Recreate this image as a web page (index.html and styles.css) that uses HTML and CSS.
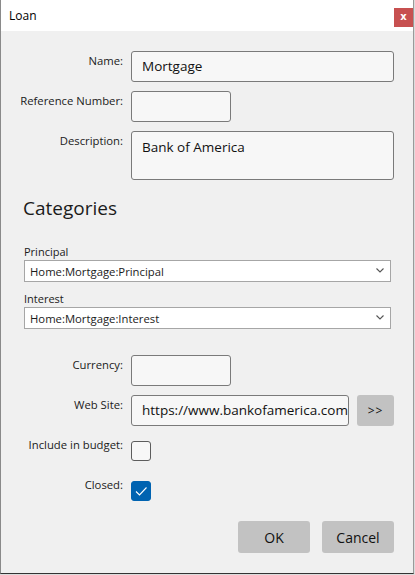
FILE: index.html
```html
<!DOCTYPE html>
<html>
<head>
<meta charset="utf-8">
<link rel="stylesheet" href="styles.css">
</head>
<body>
<div class="window">
  <div class="titlebar">
    <span class="title">Loan</span>
    <span class="close">x</span>
  </div>
  <div class="content">
    <div class="form">
      <label class="lbl">Name:</label>
      <div class="field wide">Mortgage</div>
      <label class="lbl">Reference Number:</label>
      <div class="field short"></div>
      <label class="lbl">Description:</label>
      <div class="field wide multi">Bank of America</div>
    </div>

    <h2 class="heading">Categories</h2>

    <div class="cats">
      <div class="cat-label">Principal</div>
      <div class="select"><span>Home:Mortgage:Principal</span><svg class="chev" width="8" height="5" viewBox="0 0 8 5"><path d="M0.5 0.5 L4 4 L7.5 0.5" fill="none" stroke="#555" stroke-width="1.1"/></svg></div>
      <div class="cat-label second">Interest</div>
      <div class="select"><span>Home:Mortgage:Interest</span><svg class="chev" width="8" height="5" viewBox="0 0 8 5"><path d="M0.5 0.5 L4 4 L7.5 0.5" fill="none" stroke="#555" stroke-width="1.1"/></svg></div>
    </div>

    <div class="form lower">
      <label class="lbl">Currency:</label>
      <div class="field short"></div>
      <label class="lbl">Web Site:</label>
      <div class="site-row">
        <div class="field site">https://www.bankofamerica.com</div>
        <div class="btn go">&gt;&gt;</div>
      </div>
      <label class="lbl">Include in budget:</label>
      <div class="chk-cell"><span class="check"></span></div>
      <label class="lbl">Closed:</label>
      <div class="chk-cell"><span class="check on"><svg width="20" height="20" viewBox="0 0 20 20"><path d="M5 10.5 L8.5 14 L15.5 6.5" fill="none" stroke="#fff" stroke-width="1.1"/></svg></span></div>
    </div>

    <div class="actions">
      <div class="btn big">OK</div>
      <div class="btn big">Cancel</div>
    </div>
  </div>
</div>
</body>
</html>
```
FILE: styles.css
```css
* { box-sizing: border-box; }
html, body {
  margin: 0;
  padding: 0;
  background: #dcdcdc;
  font-family: "Open Sans", "Noto Sans", sans-serif;
  color: #1b1b1b;
}
.window {
  width: 414px;
  height: 574px;
  border-left: 1px solid #8a8a8a;
  border-right: 1px solid #9a9a9a;
  border-bottom: 1px solid #333;
  background: #f0f0f0;
  display: flex;
  flex-direction: column;
}
.titlebar {
  height: 31px;
  background: #fff;
  display: flex;
  align-items: flex-start;
  justify-content: space-between;
  padding-left: 8px;
}
.title {
  font-size: 12px;
  line-height: 16px;
  margin-top: 8px;
  color: #000;
}
.close {
  width: 19px;
  height: 19px;
  margin-top: 8px;
  background: #c75050;
  color: #fff;
  font-family: "DejaVu Sans", sans-serif;
  font-weight: bold;
  font-size: 10px;
  line-height: 18px;
  text-align: center;
}
.content {
  flex: 1;
  padding: 20px 19px 0 21px;
  display: flex;
  flex-direction: column;
}
.form {
  display: grid;
  grid-template-columns: 101px minmax(0, 1fr);
  column-gap: 8px;
  row-gap: 9px;
  align-items: start;
}
.lbl {
  justify-self: end;
  white-space: nowrap;
  font-size: 11.3px;
  line-height: 15px;
  padding-top: 2px;
  color: #1b1b1b;
}
.field {
  height: 31px;
  border: 1px solid #7a7a7a;
  border-radius: 3px;
  background: #f7f7f7;
  font-size: 13.5px;
  line-height: 29px;
  padding: 0 10px;
  color: #111;
  white-space: nowrap;
  overflow: hidden;
  min-width: 0;
}
.field.short { width: 100px; }
.field.multi {
  height: 49px;
  line-height: 18px;
  padding-top: 6px;
}
.heading {
  margin: 14px 0 0 1px;
  font-size: 19px;
  font-weight: normal;
  line-height: 28px;
  color: #1b1b1b;
}
.cats {
  margin: 22px 3px 0 2px;
  display: flex;
  flex-direction: column;
}
.cat-label {
  font-size: 11px;
  line-height: 16px;
}
.cat-label.second { margin-top: 9px; }
.select {
  height: 22px;
  border: 1px solid #a6a6a6;
  background: #fff;
  display: flex;
  align-items: center;
  justify-content: space-between;
  padding: 0 6px 0 5px;
  font-size: 11.3px;
}
.chev { margin-top: -2px; }
.form.lower { margin-top: 26px; }
.site-row {
  display: flex;
  gap: 8px;
  min-width: 0;
}
.field.site {
  flex: 1;
  padding: 0 0 0 10px;
}
.btn {
  background: #c2c2c2;
  border-radius: 3px;
  display: flex;
  align-items: center;
  justify-content: center;
  color: #111;
}
.btn.go {
  flex: none;
  width: 37px;
  height: 31px;
  font-size: 12px;
  letter-spacing: 1px;
}
.chk-cell {
  height: 31px;
  padding-top: 6px;
}
.check {
  display: block;
  width: 20px;
  height: 20px;
  border: 1px solid #5c5c5c;
  border-radius: 3px;
  background: #f7f7f7;
}
.check.on {
  background: #0063b1;
  border-color: #0063b1;
}
.check.on svg { display: block; margin: -1px; }
.actions {
  margin-top: 15px;
  display: flex;
  justify-content: flex-end;
  gap: 12px;
}
.btn.big {
  width: 72px;
  height: 32px;
  font-size: 14px;
}
```
